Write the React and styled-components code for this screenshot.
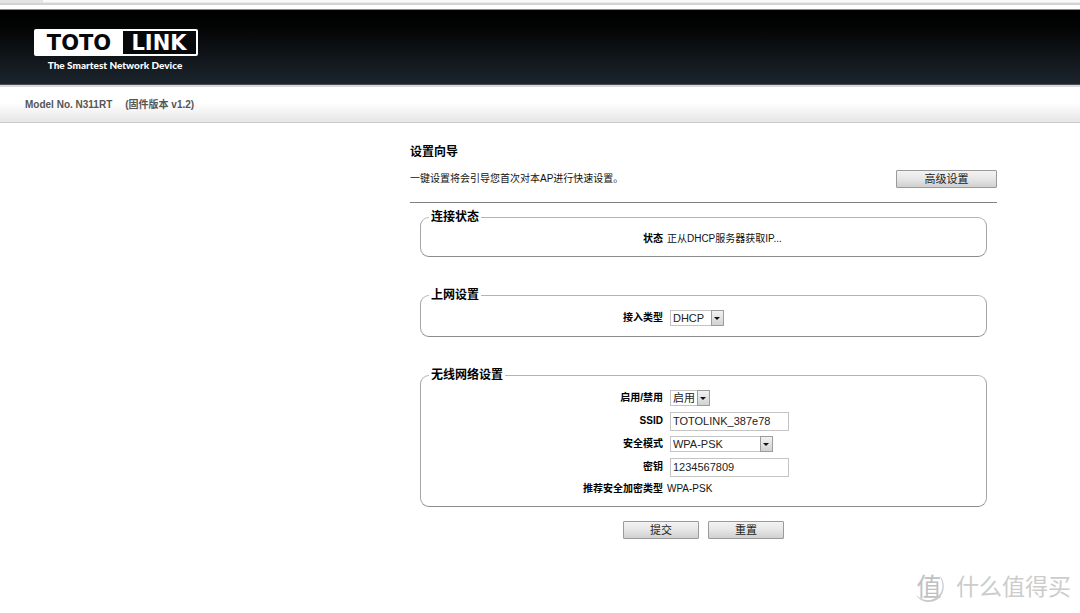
import React from "react";
import styled, { createGlobalStyle } from "styled-components";

const GlobalStyle = createGlobalStyle`
  *, *::before, *::after { box-sizing: border-box; }
  body {
    margin: 0;
    background: #fff;
    color: #111;
    font: 10px/16px "Liberation Sans", "Noto Sans CJK SC", sans-serif;
  }
`;

const Page = styled.div`
  position: relative;
  min-height: 100vh;
  display: flex;
  flex-direction: column;
`;

const BrowserEdge = styled.div`
  height: 9px;
  background: linear-gradient(#fafafa 0 2px, #ececec 2px 3px, #d3d3d3 3px 5px, #fff 5px 9px);
`;

const TabEdge = styled.div`
  width: 43px;
  height: 3px;
  background: #e4e4e4;
`;

const Header = styled.header`
  height: 76px;
  padding: 19px 33px 0;
  border-top: 1px solid #8c8c8c;
  border-bottom: 1px solid #4a4f55;
  background: linear-gradient(#000 0%, #020303 20%, #1c252d 100%);
`;

const Brand = styled.a`
  display: inline-flex;
  flex-direction: column;
  align-items: center;
  color: #fff;
  text-decoration: none;
`;

const ModelBar = styled.div`
  display: flex;
  align-items: center;
  gap: 13px;
  height: 38px;
  padding: 0 25px;
  border-top: 2px solid #d9d9d9;
  border-bottom: 1px solid #cbcbcb;
  background: linear-gradient(#fff 45%, #e6e6e6);
  color: #555;
  font-weight: bold;
`;

const Main = styled.main`
  display: grid;
  grid-template-columns: 410px minmax(0, 587px);
  padding-top: 21px;
`;

const Wizard = styled.form`
  grid-column: 2;
  display: flex;
  flex-direction: column;
`;

const Title = styled.h1`
  margin: 0;
  font-size: 12px;
  line-height: 16px;
  color: #000;
`;

const Intro = styled.div`
  display: flex;
  align-items: center;
  justify-content: space-between;
  padding: 10px 0 14px;
  border-bottom: 1px solid #808080;
`;

const Text = styled.p`
  margin: 0;
`;

const Button = styled.button`
  width: ${(p) => (p.$wide ? 101 : 76)}px;
  height: 18px;
  padding: 0;
  border: 1px solid #9a9a9a;
  border-radius: 1px;
  background: linear-gradient(#f3f3f3, #e6e6e6 50%, #d0d0d0);
  color: #222;
  font: inherit;
  font-size: 11px;
  line-height: 16px;
`;

const Groups = styled.div`
  display: flex;
  flex-direction: column;
  gap: 30px;
  padding: 6px 10px 0;
`;

const Group = styled.fieldset`
  min-width: 0;
  margin: 0;
  padding: 0 0 8px;
  border: 1px solid #a6a6a6;
  border-top-color: #b4b4b4;
  border-bottom-color: #8c8c8c;
  border-radius: 9px;
`;

const Legend = styled.legend`
  margin-left: 8px;
  padding: 0 2px;
  color: #000;
  font-size: 12px;
  font-weight: bold;
  line-height: 16px;
`;

const Rows = styled.div`
  display: flex;
  flex-direction: column;
  gap: 3px;
  padding-top: 5px;
`;

const Row = styled.div`
  display: grid;
  grid-template-columns: calc(43% - 1px) 1fr;
  column-gap: ${(p) => (p.$text ? 4 : 7)}px;
  align-items: center;
  height: ${(p) => (p.$text ? 18 : 20)}px;
`;

const Label = styled.label`
  color: #000;
  font-weight: bold;
  text-align: right;
`;

const SelectBox = styled.span`
  position: relative;
  width: ${(p) => p.$width}px;
  height: 16px;
`;

const Select = styled.select`
  display: block;
  width: 100%;
  height: 100%;
  padding: 0 14px 0 2px;
  border: 1px solid #c4c4c4;
  border-radius: 0;
  appearance: none;
  background: #fff;
  color: #222;
  font: inherit;
  font-size: 11px;
  line-height: 14px;
`;

const Arrow = styled.span`
  position: absolute;
  top: 0;
  right: 0;
  display: grid;
  place-items: center;
  width: 13px;
  height: 16px;
  border: 1px solid #9c9c9c;
  background: linear-gradient(#f2f2f2, #d2d2d2);
  pointer-events: none;

  &::after {
    content: "";
    border: 3px solid transparent;
    border-top-color: #111;
    border-bottom-width: 0;
  }
`;

const Input = styled.input`
  width: 119px;
  height: 19px;
  padding: 0 2px;
  border: 1px solid #c4c4c4;
  border-radius: 0;
  color: #222;
  font: inherit;
  font-size: 11px;
`;

const Actions = styled.div`
  display: flex;
  justify-content: center;
  gap: 9px;
  padding-top: 14px;
`;

const Watermark = styled.div`
  position: absolute;
  right: 9px;
  bottom: 8px;
  display: flex;
  align-items: center;
  gap: 8px;
  color: #cccccc;
  font-size: 23px;
  line-height: 36px;
`;

const SealBox = styled.span`
  position: relative;
  display: grid;
  place-items: center;
  width: 38px;
  height: 36px;
  font-size: 25px;
  color: #c0c0c0;
`;

const SealRing = styled.svg`
  position: absolute;
  inset: 0;
`;

function Logo() {
  return (
    <svg width="166" height="46" viewBox="0 0 166 46" role="img" aria-label="TOTOLINK">
      <rect x="1" y="0" width="164" height="27" rx="2" fill="#fff" />
      <rect x="90" y="2" width="73" height="23" fill="#06080a" />
      <g fontFamily="DejaVu Sans" fontWeight="bold" fontSize="21" textAnchor="middle">
        <text x="46" y="21" fill="#06080a">TOTO</text>
        <text x="126" y="21" fill="#fff">LINK</text>
      </g>
      <text x="82" y="40" fill="#fff" fontFamily="Lato" fontWeight="900" fontSize="10" textAnchor="middle">
        The Smartest Network Device
      </text>
    </svg>
  );
}

function Seal() {
  return (
    <SealBox>
      值
      <SealRing width="38" height="36" viewBox="0 0 38 36" aria-hidden="true">
        <path d="M29 6C36 13 35 24 28 30C21 35 11 34 6 26C13 33 22 32 27 28C34 23 34 14 29 6Z" fill="#c8c8c8" />
      </SealRing>
    </SealBox>
  );
}

function SelectRow({ id, label, width, options }) {
  return (
    <Row>
      <Label htmlFor={id}>{label}</Label>
      <SelectBox $width={width}>
        <Select id={id}>
          {options.map((o) => (
            <option key={o}>{o}</option>
          ))}
        </Select>
        <Arrow />
      </SelectBox>
    </Row>
  );
}

function InputRow({ id, label, value }) {
  return (
    <Row>
      <Label htmlFor={id}>{label}</Label>
      <Input id={id} type="text" defaultValue={value} />
    </Row>
  );
}

function TextRow({ label, value }) {
  return (
    <Row $text>
      <Label as="span">{label}</Label>
      <span>{value}</span>
    </Row>
  );
}

export default function App() {
  return (
    <Page>
      <GlobalStyle />
      <BrowserEdge>
        <TabEdge />
      </BrowserEdge>
      <Header>
        <Brand href="#">
          <Logo />
        </Brand>
      </Header>
      <ModelBar>
        <span>Model No. N311RT</span>
        <span>(固件版本 v1.2)</span>
      </ModelBar>
      <Main>
        <Wizard onSubmit={(e) => e.preventDefault()}>
          <Title>设置向导</Title>
          <Intro>
            <Text>一键设置将会引导您首次对本AP进行快速设置。</Text>
            <Button type="button" $wide>高级设置</Button>
          </Intro>
          <Groups>
            <Group>
              <Legend>连接状态</Legend>
              <Rows>
                <TextRow label="状态" value="正从DHCP服务器获取IP..." />
              </Rows>
            </Group>
            <Group>
              <Legend>上网设置</Legend>
              <Rows>
                <SelectRow id="wan" label="接入类型" width={54} options={["DHCP"]} />
              </Rows>
            </Group>
            <Group>
              <Legend>无线网络设置</Legend>
              <Rows>
                <SelectRow id="radio" label="启用/禁用" width={40} options={["启用", "禁用"]} />
                <InputRow id="ssid" label="SSID" value="TOTOLINK_387e78" />
                <SelectRow id="security" label="安全模式" width={103} options={["WPA-PSK"]} />
                <InputRow id="key" label="密钥" value="1234567809" />
                <TextRow label="推荐安全加密类型" value="WPA-PSK" />
              </Rows>
            </Group>
          </Groups>
          <Actions>
            <Button type="submit">提交</Button>
            <Button type="reset">重置</Button>
          </Actions>
        </Wizard>
      </Main>
      <Watermark>
        <Seal />
        <span>什么值得买</span>
      </Watermark>
    </Page>
  );
}
